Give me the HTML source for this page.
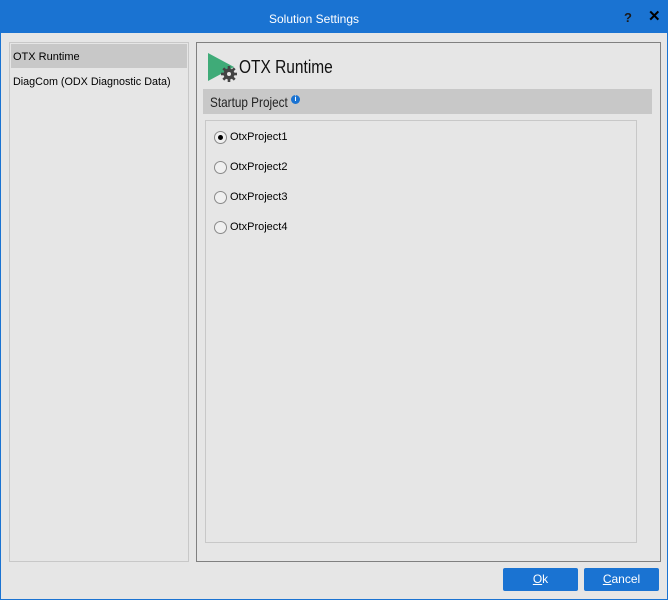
<!DOCTYPE html>
<html><head><style>
*{margin:0;padding:0;box-sizing:border-box}
body{width:668px;height:600px;background:#1a73d2;font-family:"Liberation Sans",sans-serif;position:relative;overflow:hidden}
.abs{position:absolute}
#body{left:1px;top:33px;width:666px;height:566px;background:#e6e6e6}
.t{font-size:12px;color:#000;white-space:nowrap}
.rad{width:13px;height:13px;border:1px solid #8a8a8a;border-radius:50%;background:#f0f0f0}
.btn{background:#1a73d2;color:#fff;font-size:12px;text-align:center;line-height:23px;border-radius:2px;height:23px}
</style></head><body>
<div class="abs t" style="left:0;width:628px;top:12px;text-align:center;color:#fff;font-size:12px">Solution Settings</div>
<div class="abs" style="left:624px;top:10px;font-size:13px;font-weight:bold;color:#1a1a1a">?</div>
<div class="abs" style="left:648px;top:7px;font-size:15px;font-weight:bold;color:#000">✕</div>
<div id="body" class="abs"></div>
<div class="abs" style="left:9px;top:42px;width:180px;height:520px;border:1px solid #c8c8c8"></div>
<div class="abs" style="left:11px;top:44px;width:176px;height:24px;background:#c8c8c8"></div>
<div class="abs t" style="left:13px;top:51px;font-size:11px">OTX Runtime</div>
<div class="abs t" style="left:13px;top:76px;font-size:11px;transform:scaleX(.98);transform-origin:left">DiagCom (ODX Diagnostic Data)</div>
<div class="abs" style="left:196px;top:42px;width:465px;height:520px;border:1px solid #808080"></div>
<svg class="abs" style="left:207px;top:52px" width="34" height="32" viewBox="0 0 34 32">
<polygon points="1,1 1,29 27,15" fill="#3fab78"/>
<g transform="translate(22,22)" fill="#444"><circle r="5.5"/><g stroke="#444" stroke-width="2.6"><line x1="0" y1="-8" x2="0" y2="8"/><line x1="-8" y1="0" x2="8" y2="0"/><line x1="-5.7" y1="-5.7" x2="5.7" y2="5.7"/><line x1="-5.7" y1="5.7" x2="5.7" y2="-5.7"/></g><circle r="2" fill="#e6e6e6"/></g>
</svg>
<div class="abs t" style="left:239px;top:57px;font-size:18px;color:#111;transform:scaleX(.86);transform-origin:left">OTX Runtime</div>
<div class="abs" style="left:203px;top:89px;width:449px;height:25px;background:#c8c8c8"></div>
<div class="abs t" style="left:210px;top:94px;font-size:14px;color:#222;transform:scaleX(.84);transform-origin:left">Startup Project</div>
<div class="abs" style="left:291px;top:95px;width:9px;height:9px;border-radius:50%;background:#1a73d2;color:#fff;font-size:7px;font-weight:bold;text-align:center;line-height:9px">i</div>
<div class="abs" style="left:205px;top:120px;width:432px;height:423px;border:1px solid #c8c8c8"></div>
<div class="abs rad" style="left:214px;top:131px"><div style="width:5px;height:5px;background:#000;border-radius:50%;margin:3px"></div></div>
<div class="abs t" style="left:230px;top:131px;font-size:11px">OtxProject1</div>
<div class="abs rad" style="left:214px;top:161px"></div>
<div class="abs t" style="left:230px;top:161px;font-size:11px">OtxProject2</div>
<div class="abs rad" style="left:214px;top:191px"></div>
<div class="abs t" style="left:230px;top:191px;font-size:11px">OtxProject3</div>
<div class="abs rad" style="left:214px;top:221px"></div>
<div class="abs t" style="left:230px;top:221px;font-size:11px">OtxProject4</div>
<div class="abs btn" style="left:503px;top:568px;width:75px"><u>O</u>k</div>
<div class="abs btn" style="left:584px;top:568px;width:75px"><u>C</u>ancel</div>
</body></html>
